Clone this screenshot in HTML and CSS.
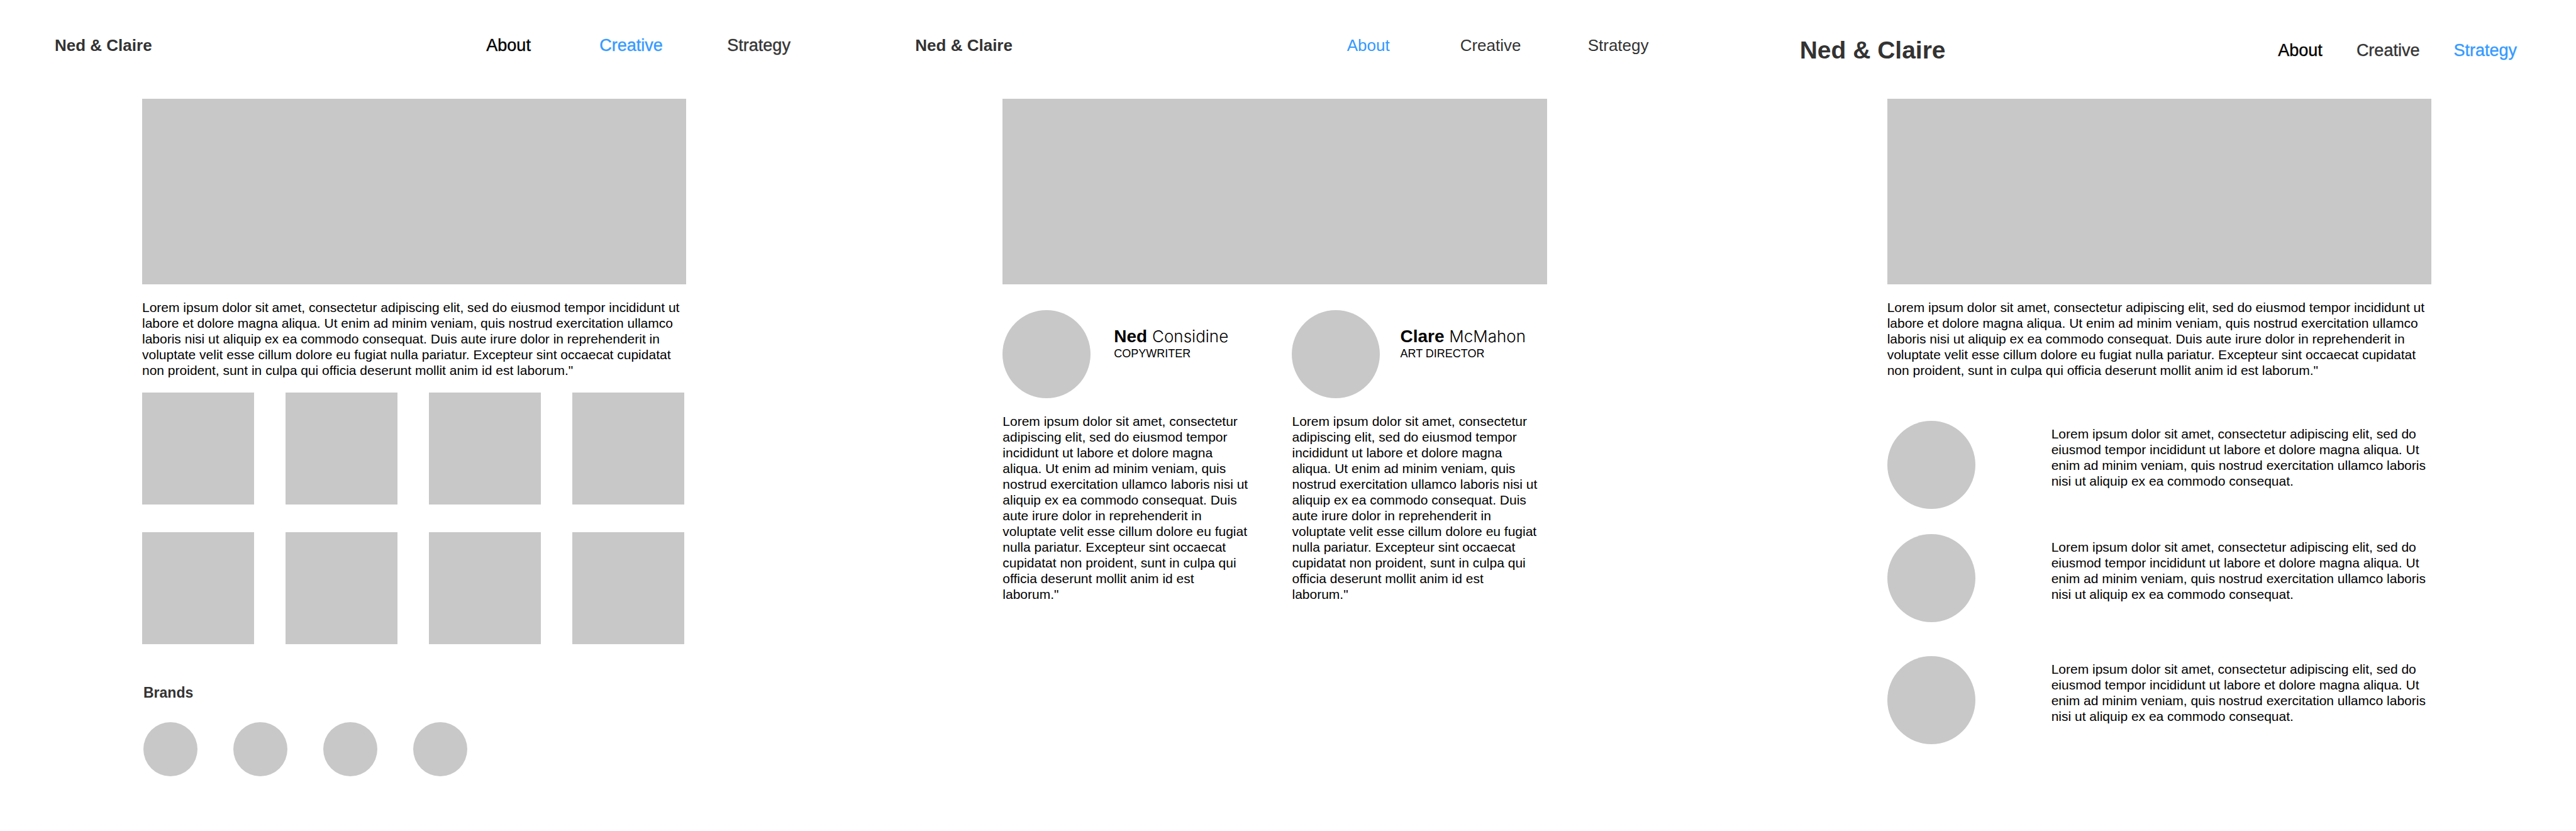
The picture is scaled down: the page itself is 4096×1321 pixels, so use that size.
FILE: index.html
```html
<!DOCTYPE html>
<html lang="en">
<head>
<meta charset="utf-8">
<title>Ned &amp; Claire</title>
<link rel="stylesheet" href="styles.css">
</head>
<body>
<div class="boards">

  <section class="board">
    <header class="header">
      <a class="logo" href="#">Ned &amp; Claire</a>
      <nav class="nav nav-medium">
        <a class="nav-strong" href="#about">About</a>
        <a class="nav-active" href="#creative">Creative</a>
        <a href="#strategy">Strategy</a>
      </nav>
    </header>
    <main class="content">
      <div class="hero"></div>
      <p class="intro">Lorem ipsum dolor sit amet, consectetur adipiscing elit, sed do eiusmod tempor incididunt ut labore et dolore magna aliqua. Ut enim ad minim veniam, quis nostrud exercitation ullamco laboris nisi ut aliquip ex ea commodo consequat. Duis aute irure dolor in reprehenderit in voluptate velit esse cillum dolore eu fugiat nulla pariatur. Excepteur sint occaecat cupidatat non proident, sunt in culpa qui officia deserunt mollit anim id est laborum."</p>
      <div class="tiles">
        <div class="tile"></div><div class="tile"></div><div class="tile"></div><div class="tile"></div>
        <div class="tile"></div><div class="tile"></div><div class="tile"></div><div class="tile"></div>
      </div>
      <section class="brands">
        <h2 class="brands-title">Brands</h2>
        <div class="brands-list">
          <div class="brand"></div><div class="brand"></div><div class="brand"></div><div class="brand"></div>
        </div>
      </section>
    </main>
  </section>

  <section class="board board-about">
    <header class="header">
      <a class="logo" href="#">Ned &amp; Claire</a>
      <nav class="nav">
        <a class="nav-active" href="#about">About</a>
        <a href="#creative">Creative</a>
        <a href="#strategy">Strategy</a>
      </nav>
    </header>
    <main class="content">
      <div class="hero"></div>
      <div class="people">
        <article class="person">
          <div class="person-head">
            <div class="avatar"></div>
            <div class="person-info">
              <h2 class="name"><b>Ned</b> <span class="surname">Considine</span></h2>
              <p class="role">COPYWRITER</p>
            </div>
          </div>
          <p class="bio">Lorem ipsum dolor sit amet, consectetur adipiscing elit, sed do eiusmod tempor incididunt ut labore et dolore magna aliqua. Ut enim ad minim veniam, quis nostrud exercitation ullamco laboris nisi ut aliquip ex ea commodo consequat. Duis aute irure dolor in reprehenderit in voluptate velit esse cillum dolore eu fugiat nulla pariatur. Excepteur sint occaecat cupidatat non proident, sunt in culpa qui officia deserunt mollit anim id est laborum."</p>
        </article>
        <article class="person">
          <div class="person-head person-head-tight">
            <div class="avatar"></div>
            <div class="person-info">
              <h2 class="name"><b>Clare</b> <span class="surname">McMahon</span></h2>
              <p class="role">ART DIRECTOR</p>
            </div>
          </div>
          <p class="bio">Lorem ipsum dolor sit amet, consectetur adipiscing elit, sed do eiusmod tempor incididunt ut labore et dolore magna aliqua. Ut enim ad minim veniam, quis nostrud exercitation ullamco laboris nisi ut aliquip ex ea commodo consequat. Duis aute irure dolor in reprehenderit in voluptate velit esse cillum dolore eu fugiat nulla pariatur. Excepteur sint occaecat cupidatat non proident, sunt in culpa qui officia deserunt mollit anim id est laborum."</p>
        </article>
      </div>
    </main>
  </section>

  <section class="board board-strategy">
    <header class="header header-large">
      <a class="logo logo-large" href="#">Ned &amp; Claire</a>
      <nav class="nav nav-medium nav-compact">
        <a class="nav-strong" href="#about">About</a>
        <a href="#creative">Creative</a>
        <a class="nav-active" href="#strategy">Strategy</a>
      </nav>
    </header>
    <main class="content">
      <div class="hero"></div>
      <p class="intro">Lorem ipsum dolor sit amet, consectetur adipiscing elit, sed do eiusmod tempor incididunt ut labore et dolore magna aliqua. Ut enim ad minim veniam, quis nostrud exercitation ullamco laboris nisi ut aliquip ex ea commodo consequat. Duis aute irure dolor in reprehenderit in voluptate velit esse cillum dolore eu fugiat nulla pariatur. Excepteur sint occaecat cupidatat non proident, sunt in culpa qui officia deserunt mollit anim id est laborum."</p>
      <div class="steps">
        <div class="step">
          <div class="avatar"></div>
          <p class="step-text">Lorem ipsum dolor sit amet, consectetur adipiscing elit, sed do eiusmod tempor incididunt ut labore et dolore magna aliqua. Ut enim ad minim veniam, quis nostrud exercitation ullamco laboris nisi ut aliquip ex ea commodo consequat.</p>
        </div>
        <div class="step">
          <div class="avatar"></div>
          <p class="step-text">Lorem ipsum dolor sit amet, consectetur adipiscing elit, sed do eiusmod tempor incididunt ut labore et dolore magna aliqua. Ut enim ad minim veniam, quis nostrud exercitation ullamco laboris nisi ut aliquip ex ea commodo consequat.</p>
        </div>
        <div class="step step-last">
          <div class="avatar"></div>
          <p class="step-text">Lorem ipsum dolor sit amet, consectetur adipiscing elit, sed do eiusmod tempor incididunt ut labore et dolore magna aliqua. Ut enim ad minim veniam, quis nostrud exercitation ullamco laboris nisi ut aliquip ex ea commodo consequat.</p>
        </div>
      </div>
    </main>
  </section>

</div>
</body>
</html>
```

FILE: styles.css
```css
* {
  box-sizing: border-box;
}

body {
  margin: 0;
  background: #fff;
  color: #000;
  font-family: "Liberation Sans", Arial, sans-serif;
  font-size: 21px;
  line-height: 25px;
}

h2,
p {
  margin: 0;
}

a {
  color: inherit;
  text-decoration: none;
}

.boards {
  display: flex;
}

.board {
  flex: 1;
  min-width: 0;
}

.board-about {
  margin-left: 47px;
}

.board-strategy {
  margin-left: 85px;
}

/* Header */

.header {
  display: flex;
  align-items: center;
  justify-content: space-between;
  padding: 48px 64px 61px 87px;
  color: #333;
  line-height: 48px;
}

.header-large {
  padding: 56px 94px 53px 87px;
}

.logo {
  font-size: 26px;
  font-weight: bold;
}

.logo-large {
  font-size: 39px;
}

.nav {
  display: grid;
  grid-template-columns: 180px 203px 101px;
  font-size: 26px;
}

/* Liberation Sans has no medium weight: a faint stroke thickens the stems */
.nav-medium {
  font-size: 27px;
  -webkit-text-stroke: 1px color-mix(in srgb, currentColor 40%, transparent);
}

.nav-compact {
  display: flex;
  gap: 54px;
}

.nav-strong {
  color: #000;
}

.nav-active {
  color: #39f;
}

/* Shared content */

.content {
  padding: 0 230px 0 226px;
}

.hero,
.tile,
.brand,
.avatar {
  background: #c8c8c8;
}

.hero {
  height: 295px;
}

.intro {
  margin-top: 24px;
}

.avatar {
  flex: none;
  width: 140px;
  height: 140px;
  border-radius: 50%;
}

/* Creative */

.tiles {
  display: grid;
  grid-template-columns: repeat(4, 1fr);
  gap: 44px 50px;
  margin: 23px 3px 0 0;
}

.tile {
  aspect-ratio: 1;
}

.brands {
  margin: 65px 0 0 2px;
}

.brands-title {
  color: #333;
  font-size: 23px;
  line-height: 25px;
}

.brands-list {
  display: flex;
  gap: 57px;
  margin-top: 34px;
}

.brand {
  width: 86px;
  height: 86px;
  border-radius: 50%;
}

/* About */

.people {
  display: grid;
  grid-template-columns: 1fr 1fr;
  gap: 66px;
  margin: 41px 11px 0 0;
}

.person-head {
  display: flex;
  gap: 37px;
}

.person-head-tight {
  gap: 32px;
}

.person-info {
  padding-top: 26px;
}

.name {
  font-size: 28px;
  font-weight: normal;
  line-height: 32px;
}

.surname {
  font-family: Inter, "Liberation Sans", sans-serif;
  font-size: 26px;
  font-weight: 300;
}

.role {
  font-size: 18px;
  line-height: 22px;
}

.bio {
  margin-top: 24px;
}

/* Strategy */

.steps {
  display: grid;
  gap: 40px;
  margin-top: 68px;
}

.step {
  display: flex;
  gap: 121px;
}

.step-last {
  margin-top: 14px;
}

.step-text {
  padding-top: 8px;
}
```
